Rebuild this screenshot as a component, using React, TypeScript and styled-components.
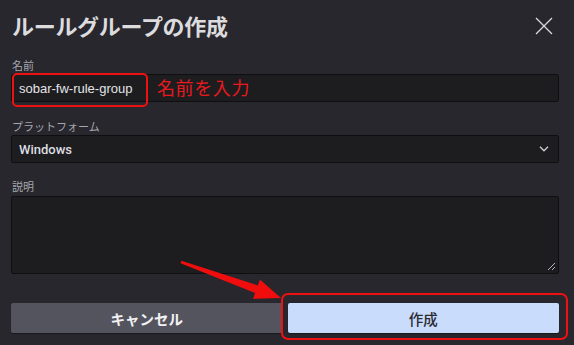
import React from 'react';
import styled, { createGlobalStyle } from 'styled-components';

const Global = createGlobalStyle`
  html, body { margin: 0; padding: 0; background: #27272d; }
  body { font-family: "Noto Sans CJK JP", "Noto Sans", sans-serif; }
  * { box-sizing: border-box; }
`;

const Dialog = styled.div`
  position: relative;
  width: 574px;
  height: 345px;
  padding: 10px 15px 0 11px;
  background: #27272d;
  display: flex;
  flex-direction: column;
  overflow: hidden;
`;

const Header = styled.div`
  display: flex;
  justify-content: space-between;
  align-items: center;
  height: 30px;
`;

const Title = styled.h1`
  margin: 0;
  padding-left: 1px;
  font-size: 22px;
  line-height: 30px;
  font-weight: 700;
  color: #dcdcdf;
  letter-spacing: -0.3px;
`;

const CloseButton = styled.button`
  width: 18px;
  height: 18px;
  margin: 2px 6px 0 0;
  padding: 0;
  border: 0;
  background: transparent;
  display: flex;
  align-items: center;
  justify-content: center;
`;

const Field = styled.div<{ $top: number }>`
  display: flex;
  flex-direction: column;
  margin-top: ${(p) => p.$top}px;
`;

const Label = styled.label<{ $gap?: number }>`
  font-size: 11px;
  line-height: 14px;
  color: #a6a6ad;
  padding-left: 1px;
  margin-bottom: ${(p) => p.$gap ?? 2}px;
`;

const Box = styled.div`
  position: relative;
  height: 28px;
  border: 1px solid #0f0f12;
  border-radius: 2px;
  background: #1d1d20;
  display: flex;
  align-items: center;
  padding: 0 8px 0 7px;
  font-family: "Liberation Sans", Arial, sans-serif;
  font-size: 13px;
  color: #e4e4e7;
`;

const SelectBox = styled(Box)`
  justify-content: space-between;
  font-family: Roboto, "Liberation Sans", sans-serif;
  font-weight: 500;
  font-size: 13px;
  color: #dedee2;
`;

const TextArea = styled.div`
  position: relative;
  height: 78px;
  border: 1px solid #0f0f12;
  border-radius: 2px;
  background: #1d1d20;
`;

const Resize = styled.svg`
  position: absolute;
  right: 2px;
  bottom: 2px;
`;

const Buttons = styled.div`
  display: grid;
  grid-template-columns: 1fr 1fr;
  gap: 5px;
  margin-top: 29px;
`;

const Button = styled.button<{ $primary?: boolean }>`
  height: 30px;
  border: 0;
  border-radius: 2px;
  font-family: "Noto Sans CJK JP", sans-serif;
  font-size: 14.5px;
  font-weight: ${(p) => (p.$primary ? 500 : 700)};
  background: ${(p) => (p.$primary ? '#c9dcfb' : '#54545f')};
  color: ${(p) => (p.$primary ? '#2b2b33' : '#f2f2f4')};
  box-shadow: 0 1px 1px rgba(0, 0, 0, 0.35);
`;

const Highlight = styled.div<{ $radius: number }>`
  position: absolute;
  border: 2px solid #ee1111;
  border-radius: ${(p) => p.$radius}px;
  pointer-events: none;
`;

const Note = styled.span`
  position: absolute;
  left: 157px;
  top: 74px;
  font-size: 18px;
  line-height: 26px;
  color: #e8191c;
  letter-spacing: 0.6px;
`;

const Overlay = styled.svg`
  position: absolute;
  left: 0;
  top: 0;
  pointer-events: none;
`;

export default function App() {
  return (
    <>
      <Global />
      <Dialog>
        <Header>
          <Title>ルールグループの作成</Title>
          <CloseButton aria-label="閉じる">
            <svg width="18" height="18" viewBox="0 0 18 18">
              <path d="M1 1L17 17M17 1L1 17" stroke="#d8d8dc" strokeWidth="1.3" />
            </svg>
          </CloseButton>
        </Header>

        <Field $top={18}>
          <Label>名前</Label>
          <Box>sobar-fw-rule-group</Box>
        </Field>

        <Field $top={17}>
          <Label>プラットフォーム</Label>
          <SelectBox>
            Windows
            <svg width="10" height="6" viewBox="0 0 10 6" style={{ marginRight: 1 }}>
              <path d="M1 0.8L5 4.8L9 0.8" stroke="#cfcfd4" strokeWidth="1.3" fill="none" />
            </svg>
          </SelectBox>
        </Field>

        <Field $top={16}>
          <Label $gap={3}>説明</Label>
          <TextArea>
            <Resize width="9" height="9" viewBox="0 0 9 9">
              <path d="M8 1L1 8M8 5L5 8" stroke="#b5b5ba" strokeWidth="1" />
            </Resize>
          </TextArea>
        </Field>

        <Buttons>
          <Button>キャンセル</Button>
          <Button $primary>作成</Button>
        </Buttons>

        <Highlight $radius={5} style={{ left: 12, top: 73, width: 136, height: 34 }} />
        <Note>名前を入力</Note>
        <Highlight $radius={7} style={{ left: 281, top: 293, width: 287, height: 47 }} />
        <Overlay width="574" height="345" viewBox="0 0 574 345">
          <polygon
            points="181.4,260.8 257.9,285.4 259.9,279.5 281,298 253.1,298.9 255.1,292.9 180.6,263.2"
            fill="#f00d0d"
          />
        </Overlay>
      </Dialog>
    </>
  );
}
